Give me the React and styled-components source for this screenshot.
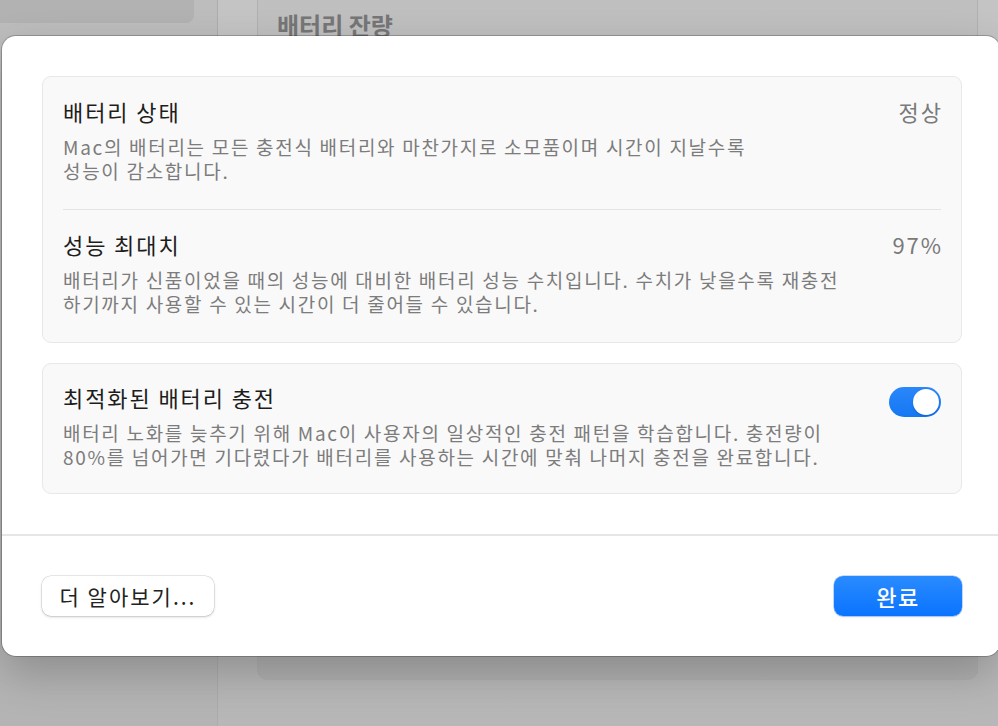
import React, { useState } from 'react';
import styled, { createGlobalStyle } from 'styled-components';

const GlobalStyle = createGlobalStyle`
    html, body {
        margin: 0;
        padding: 0;
        background: #b9b9b9;
    }
    * {
        box-sizing: border-box;
    }
    body {
        font-family: "Noto Sans CJK KR", "Noto Sans", "Liberation Sans", sans-serif;
        -webkit-font-smoothing: antialiased;
    }
`;

const rows = [
    {
        title: '배터리 상태',
        value: '정상',
        lines: [
            'Mac의 배터리는 모든 충전식 배터리와 마찬가지로 소모품이며 시간이 지날수록',
            '성능이 감소합니다.',
        ],
    },
    {
        title: '성능 최대치',
        value: '97%',
        lines: [
            '배터리가 신품이었을 때의 성능에 대비한 배터리 성능 수치입니다. 수치가 낮을수록 재충전',
            '하기까지 사용할 수 있는 시간이 더 줄어들 수 있습니다.',
        ],
    },
];

function App() {
    const [optimized, setOptimized] = useState(true);

    return (
        <Screen>
            <GlobalStyle />
            <Sidebar>
                <SidebarCard />
            </Sidebar>
            <Main>
                <BehindCard>
                    <BehindTitle>배터리 잔량</BehindTitle>
                </BehindCard>
            </Main>

            <Sheet>
                <Content>
                    <Card>
                        {rows.map((row, i) => (
                            <React.Fragment key={row.title}>
                                {i > 0 && <Divider />}
                                <Row>
                                    <Text>
                                        <Title>{row.title}</Title>
                                        <Desc>
                                            {row.lines.map((line) => (
                                                <span key={line}>{line}</span>
                                            ))}
                                        </Desc>
                                    </Text>
                                    <Value>{row.value}</Value>
                                </Row>
                            </React.Fragment>
                        ))}
                    </Card>
                    <Card>
                        <Row $compact>
                            <Text>
                                <Title>최적화된 배터리 충전</Title>
                                <Desc>
                                    <span>배터리 노화를 늦추기 위해 Mac이 사용자의 일상적인 충전 패턴을 학습합니다. 충전량이</span>
                                    <span>80%를 넘어가면 기다렸다가 배터리를 사용하는 시간에 맞춰 나머지 충전을 완료합니다.</span>
                                </Desc>
                            </Text>
                            <Switch $on={optimized} onClick={() => setOptimized(!optimized)}>
                                <Knob $on={optimized} />
                            </Switch>
                        </Row>
                    </Card>
                </Content>
                <Footer>
                    <Button>더 알아보기...</Button>
                    <Button $primary>완료</Button>
                </Footer>
            </Sheet>
        </Screen>
    );
}

const Screen = styled.div`
    position: relative;
    width: 998px;
    height: 726px;
    overflow: hidden;
    display: flex;
    background: linear-gradient(180deg, #c2c2c2 0%, #b9b9b9 100%);
`;

const Sidebar = styled.div`
    width: 218px;
    flex-shrink: 0;
    background: linear-gradient(180deg, #bdbdbd 0%, #b4b4b4 100%);
    border-right: 1px solid #acacac;
    padding-right: 23px;
`;

const SidebarCard = styled.div`
    height: 23px;
    background: #b2b2b2;
    border-bottom-right-radius: 8px;
`;

const Main = styled.div`
    flex: 1;
    padding: 0 20px 0 39px;
    background: linear-gradient(180deg, #c4c4c4 0%, #b7b7b7 100%);
`;

const BehindCard = styled.div`
    margin-top: -20px;
    height: 700px;
    background: linear-gradient(180deg, #c0c0c0 0%, #b1b1b1 100%);
    border: 1px solid #b0b0b0;
    border-radius: 10px;
    padding: 29px 19px;
`;

const BehindTitle = styled.h2`
    margin: 0;
    font-size: 24px;
    font-weight: 700;
    color: #767676;
    line-height: 30px;
`;

const Sheet = styled.div`
    position: absolute;
    left: 2px;
    top: 36px;
    width: 998px;
    height: 620px;
    background: #ffffff;
    border-radius: 14px;
    box-shadow: 0 0 0 1px rgba(0, 0, 0, 0.22), 0 18px 44px rgba(0, 0, 0, 0.22);
    display: flex;
    flex-direction: column;
`;

const Content = styled.div`
    padding: 40px 38px 40px 40px;
    display: flex;
    flex-direction: column;
    gap: 20px;
`;

const Card = styled.div`
    background: #f9f9f9;
    border: 1px solid #e8e8e8;
    border-radius: 9px;
    padding: 0 20px;
`;

const Row = styled.div`
    display: flex;
    justify-content: space-between;
    align-items: flex-start;
    padding: ${(p) => (p.$compact ? '19px 0 24px' : '20px 0 26px')};
`;

const Text = styled.div`
    display: flex;
    flex-direction: column;
`;

const Title = styled.div`
    font-size: 22px;
    line-height: 28px;
    letter-spacing: 1.9px;
    color: #1d1d1d;
`;

const Desc = styled.div`
    margin-top: 10px;
    display: flex;
    flex-direction: column;
    font-size: 19px;
    line-height: 24px;
    letter-spacing: 1.7px;
    color: #7c7c7c;
    span {
        white-space: nowrap;
    }
`;

const Value = styled.div`
    font-size: 22px;
    line-height: 28px;
    letter-spacing: 1.9px;
    margin-right: -1.9px;
    color: #7a7a7a;
`;

const Divider = styled.div`
    height: 1px;
    background: #e4e4e4;
`;

const Switch = styled.button`
    margin-top: 4px;
    width: 52px;
    height: 30px;
    padding: 2px;
    border: none;
    border-radius: 15px;
    background: ${(p) => (p.$on ? 'linear-gradient(180deg, #2b87fa, #1477f3)' : '#dcdcdc')};
    display: flex;
    justify-content: ${(p) => (p.$on ? 'flex-end' : 'flex-start')};
    cursor: pointer;
`;

const Knob = styled.span`
    width: 26px;
    height: 26px;
    border-radius: 50%;
    background: #ffffff;
    box-shadow: 0 1px 2px rgba(0, 0, 0, 0.2);
`;

const Footer = styled.div`
    margin-top: auto;
    border-top: 2px solid #e6e6e6;
    padding: 40px 38px 40px 40px;
    display: flex;
    justify-content: space-between;
    align-items: center;
`;

const Button = styled.button`
    height: 40px;
    min-width: ${(p) => (p.$primary ? '128px' : '172px')};
    padding: 0 12px;
    border-radius: 9px;
    border: none;
    font-family: inherit;
    font-size: ${(p) => (p.$primary ? '22px' : '21px')};
    letter-spacing: ${(p) => (p.$primary ? '1.5px' : '2px')};
    font-weight: ${(p) => (p.$primary ? 500 : 400)};
    color: ${(p) => (p.$primary ? '#ffffff' : '#222222')};
    background: ${(p) => (p.$primary ? 'linear-gradient(180deg, #2a8bff, #0a74ff)' : '#ffffff')};
    box-shadow: ${(p) =>
        p.$primary
            ? '0 0 0 0.5px rgba(0, 90, 220, 0.4), 0 1px 2px rgba(0, 80, 200, 0.2)'
            : '0 0 0 0.5px rgba(0, 0, 0, 0.15), 0 1px 3px rgba(0, 0, 0, 0.18)'};
    cursor: pointer;
`;

export default App;
